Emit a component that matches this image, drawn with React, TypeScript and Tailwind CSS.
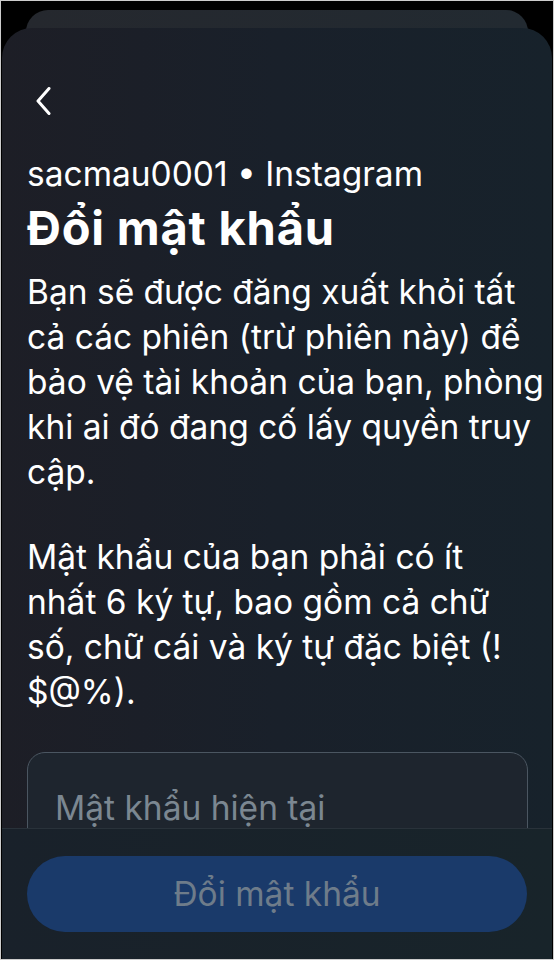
import React from "react";

export default function App() {
  return (
    <div
      className="w-[554px] h-[960px] bg-black border border-[#cdcdcd] overflow-hidden flex flex-col"
      style={{ fontFamily: "Inter, 'Noto Sans', sans-serif" }}
    >
      <div className="mx-[25px] mt-[9px] h-[40px] shrink-0 rounded-t-[22px] bg-gradient-to-r from-[#25282e] to-[#222a31]" />
      <div className="relative -mt-[22px] mx-[1px] flex-1 flex flex-col rounded-t-[30px] bg-gradient-to-r from-[#1d1e26] via-[#19202a] to-[#17222b] overflow-hidden">
        <div className="h-[800px] shrink-0 overflow-hidden pl-[25px] pr-[12px]">
          <div className="pt-[59px]">
            <svg width="28" height="28" viewBox="0 0 28 28" className="ml-[3px]">
              <path d="M19 1.5 L8 14 L19 26.5" fill="none" stroke="#ffffff" strokeWidth="3" strokeLinecap="round" strokeLinejoin="round" />
            </svg>
          </div>
          <div className="mt-[39px] text-[33.5px] leading-[40px] text-white">
            sacmau0001 • Instagram
          </div>
          <div className="mt-[9px] text-[47px] leading-[50px] font-bold text-white tracking-[0.8px]">
            Đổi mật khẩu
          </div>
          <p className="mt-[17px] text-[33.5px] leading-[45px] text-white whitespace-nowrap">
            Bạn sẽ được đăng xuất khỏi tất<br />
            cả các phiên (trừ phiên này) để<br />
            bảo vệ tài khoản của bạn, phòng<br />
            khi ai đó đang cố lấy quyền truy<br />
            cập.
          </p>
          <p className="mt-[40px] text-[33.5px] leading-[45px] text-white whitespace-nowrap">
            Mật khẩu của bạn phải có ít<br />
            nhất 6 ký tự, bao gồm cả chữ<br />
            số, chữ cái và ký tự đặc biệt (!<br />
            $@%).
          </p>
          <div className="mt-[37px] mr-[12px] h-[110px] rounded-[18px] border border-[#4b5661] bg-[#1e252e] px-[27px] pt-[35px]">
            <div className="text-[33.5px] leading-[40px] text-[#7b8791]">Mật khẩu hiện tại</div>
          </div>
        </div>
        <div className="flex-1 border-t border-[#29323a] bg-gradient-to-r from-[#19212a] to-[#18242a] px-[25px] pt-[27px]">
          <div className="h-[76px] rounded-full bg-[#1a3a6a] flex items-center justify-center">
            <span className="text-[33.5px] text-[#6e7c8a]">Đổi mật khẩu</span>
          </div>
        </div>
      </div>
    </div>
  );
}
